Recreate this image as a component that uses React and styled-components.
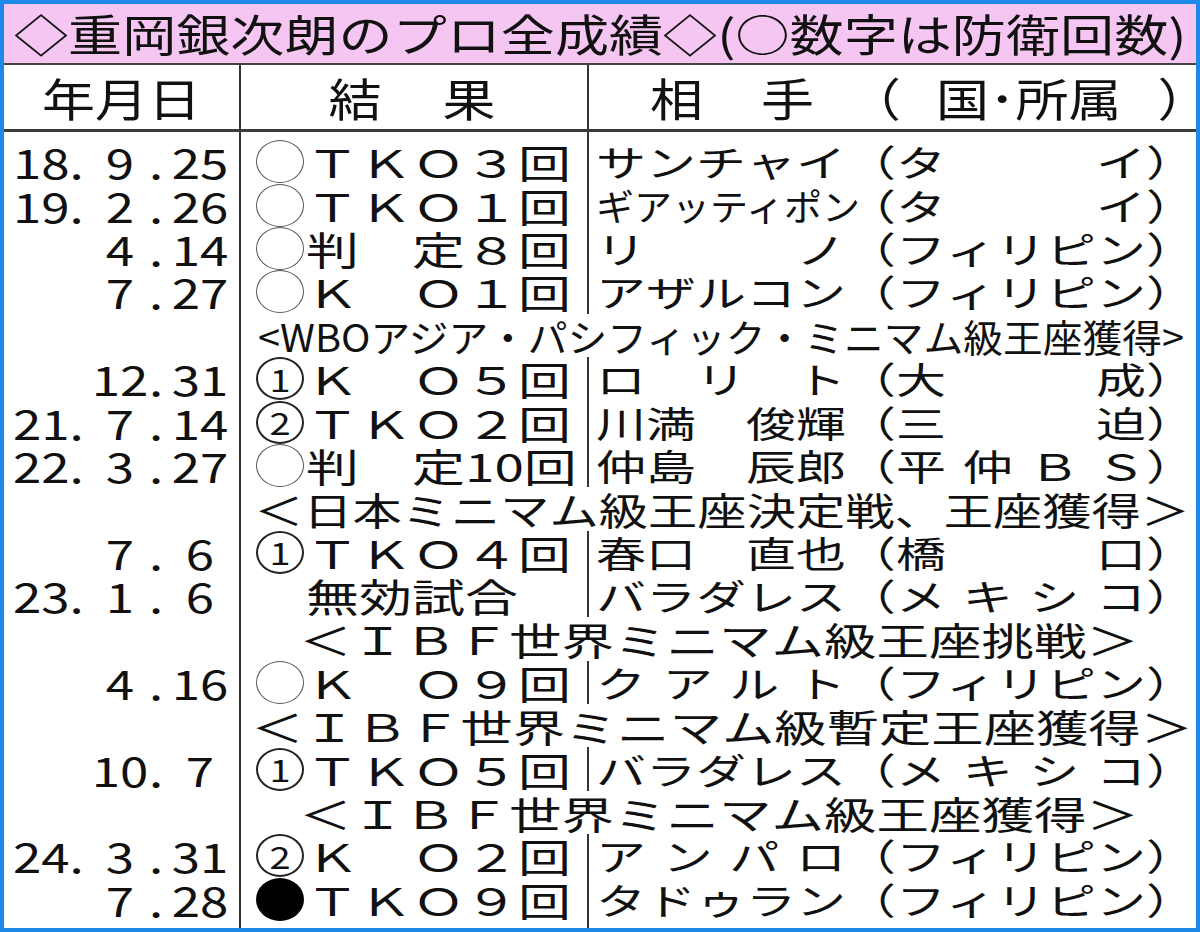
import React, { useLayoutEffect, useRef, useState } from 'react';
import styled, { createGlobalStyle } from 'styled-components';

const GlobalStyle = createGlobalStyle`
  html, body { margin: 0; padding: 0; background: #ffffff; }
  body {
    font-family: "Noto Sans CJK JP", "Noto Sans", sans-serif;
    color: #111;
  }
`;

const LINE = '#333';
const COLS = '237px 348px 1fr';
const SQUASH = 0.73;

const Frame = styled.div`
  width: 1200px;
  height: 932px;
  box-sizing: border-box;
  border: 4px solid #1e88e8;
  display: flex;
  flex-direction: column;
  overflow: hidden;
  background: #fff;
`;

const Title = styled.header`
  flex: none;
  height: 61px;
  box-sizing: border-box;
  padding-left: 10px;
  background: #f6c6f2;
  border-bottom: 2px solid #444;
  display: flex;
  align-items: center;
  font-size: 51px;
  line-height: 59px;
`;

const Head = styled.div`
  flex: none;
  display: grid;
  grid-template-columns: ${COLS};
  height: 67px;
  box-sizing: border-box;
  border-bottom: 3px solid #3c3c3c;
  font-size: 53px;
  line-height: 64px;
`;

const HeadCell = styled.div`
  display: flex;
  align-items: center;
  justify-content: ${(p) => (p.$left ? 'flex-start' : 'center')};
  padding-left: ${(p) => p.$pl || 0}px;
  border-right: ${(p) => (p.$last ? 'none' : `2px solid ${LINE}`)};
`;

const HeadWord = styled.span`
  display: inline-block;
  white-space: pre;
  margin-left: ${(p) => p.$ml || 0}px;
  letter-spacing: ${(p) => p.$ls || 0}px;
  transform: scaleY(0.86);
`;

const Body = styled.div`
  flex: 1;
  display: flex;
  flex-direction: column;
`;

const Row = styled.div`
  display: grid;
  grid-template-columns: ${COLS};
  height: ${(p) => (p.$grow ? 'auto' : `${p.$h}px`)};
  flex: ${(p) => (p.$grow ? 1 : 'none')};
  line-height: 43px;
`;

const DateCell = styled.div`
  display: flex;
  align-items: center;
  justify-content: flex-end;
  padding-right: 4px;
  border-right: 2px solid ${LINE};
  font-size: 51px;
`;

const DSlot = styled.span`
  flex: none;
  width: ${(p) => p.$w}px;
  margin-left: ${(p) => p.$ml || 0}px;
  text-align: ${(p) => p.$align || 'center'};
`;

const ResultCell = styled.div`
  display: flex;
  align-items: center;
  padding-left: 13px;
  border-right: 2px solid ${LINE};
  font-size: 53px;
`;

const OppCell = styled.div`
  display: flex;
  align-items: center;
  padding-left: 7px;
  font-size: 50px;
  white-space: nowrap;
`;

const NoteCell = styled.div`
  grid-column: span 2;
  display: flex;
  align-items: center;
  padding-left: ${(p) => p.$indent}px;
  font-size: 52px;
`;

const Flat = styled.span`
  display: inline-block;
  white-space: pre;
  transform: scaleY(${(p) => p.$sy ?? SQUASH});
`;

const MarkSlot = styled.span`
  flex: none;
  width: 52px;
  height: 43px;
  display: flex;
  align-items: center;
  justify-content: center;
`;

const Ring = styled.span`
  width: 48px;
  height: 43px;
  box-sizing: border-box;
  border-radius: 50%;
  border: ${(p) => (p.$solid ? 'none' : p.$num ? '2px solid #222' : '1.5px solid #555')};
  background: ${(p) => (p.$solid ? '#000' : 'transparent')};
  display: flex;
  align-items: center;
  justify-content: center;
  font-size: 38px;
  line-height: 1;
  color: #111;
`;

const SpreadBox = styled.span`
  flex: none;
  display: flex;
  justify-content: space-between;
  width: ${(p) => p.$w}px;
`;

const Paren = styled.span`
  flex: none;
  width: 50px;
  display: inline-block;
  transform: scaleY(${SQUASH});
`;

const FitBox = styled.span`
  flex: none;
  display: inline-block;
  white-space: nowrap;
`;

const FitInner = styled.span`
  display: inline-block;
  white-space: pre;
  transform-origin: left center;
`;

function Fit({ width, sy = SQUASH, children }) {
  const ref = useRef(null);
  const [sx, setSx] = useState(1);

  useLayoutEffect(() => {
    const measure = () => {
      if (!ref.current) return;
      const w = ref.current.offsetWidth;
      if (w > 0) setSx(width / w);
    };
    measure();
    if (document.fonts && document.fonts.ready) document.fonts.ready.then(measure);
  }, [width]);

  return (
    <FitBox style={{ width }}>
      <FitInner ref={ref} style={{ transform: `scale(${sx}, ${sy})` }}>
        {children}
      </FitInner>
    </FitBox>
  );
}

function Spread({ width, items }) {
  if (typeof items === 'string') {
    // long katakana names get squeezed into the slot, like the paper does
    if (items.length > 5) {
      return (
        <FitBox style={{ width }}>
          <Fit width={width + 14}>{items}</Fit>
        </FitBox>
      );
    }
    items = items.split('');
  }
  return (
    <SpreadBox $w={width}>
      {items.map((t, i) => (
        <Flat key={i}>{t}</Flat>
      ))}
    </SpreadBox>
  );
}

function Mark({ kind }) {
  if (kind === null) return <MarkSlot />;
  if (kind === 'x') {
    return (
      <MarkSlot>
        <Ring $solid />
      </MarkSlot>
    );
  }
  return (
    <MarkSlot>
      <Ring $num={kind !== 'o'}>{kind !== 'o' && <Flat $sy={0.8}>{kind}</Flat>}</Ring>
    </MarkSlot>
  );
}

const fights = [
  { d: ['18.', '9', '25'], mark: 'o', res: 'ＴＫＯ３回', name: 'サンチャイ', aff: ['タ', 'イ'] },
  { d: ['19.', '2', '26'], mark: 'o', res: 'ＴＫＯ１回', name: 'ギアッティポン', aff: ['タ', 'イ'] },
  { d: ['', '4', '14'], mark: 'o', res: '判　定８回', name: ['リ', 'ノ'], aff: 'フィリピン' },
  { d: ['', '7', '27'], mark: 'o', res: 'Ｋ　Ｏ１回', name: 'アザルコン', aff: 'フィリピン' },
  { note: '<WBOアジア・パシフィック・ミニマム級王座獲得>', indent: 17, width: 926 },
  { d: ['', '12', '31'], mark: '1', res: 'Ｋ　Ｏ５回', name: ['ロ', 'リ', 'ト'], aff: ['大', '成'] },
  { d: ['21.', '7', '14'], mark: '2', res: 'ＴＫＯ２回', name: ['川満', '俊輝'], aff: ['三', '迫'] },
  { d: ['22.', '3', '27'], mark: 'o', res: '判　定10回', name: ['仲島', '辰郎'], aff: ['平', '仲', 'Ｂ', 'Ｓ'] },
  { note: '＜日本ミニマム級王座決定戦、王座獲得＞', indent: 13, width: 936 },
  { d: ['', '7', '6'], mark: '1', res: 'ＴＫＯ４回', name: ['春口', '直也'], aff: ['橋', '口'] },
  { d: ['23.', '1', '6'], mark: null, res: '無効試合', name: 'バラダレス', aff: ['メ', 'キ', 'シ', 'コ'] },
  { note: '＜ＩＢＦ世界ミニマム級王座挑戦＞', indent: 58, width: 840 },
  { d: ['', '4', '16'], mark: 'o', res: 'Ｋ　Ｏ９回', name: ['ク', 'ア', 'ル', 'ト'], aff: 'フィリピン' },
  { note: '＜ＩＢＦ世界ミニマム級暫定王座獲得＞', indent: 10, width: 942 },
  { d: ['', '10', '7'], mark: '1', res: 'ＴＫＯ５回', name: 'バラダレス', aff: ['メ', 'キ', 'シ', 'コ'] },
  { note: '＜ＩＢＦ世界ミニマム級王座獲得＞', indent: 58, width: 840 },
  { d: ['24.', '3', '31'], mark: '2', res: 'Ｋ　Ｏ２回', name: ['ア', 'ン', 'パ', 'ロ'], aff: 'フィリピン' },
  { d: ['', '7', '28'], mark: 'x', res: 'ＴＫＯ９回', name: 'タドゥラン', aff: 'フィリピン' },
];

function DateParts({ d }) {
  const [y, m, day] = d;
  if (!m) return <DateCell />;
  return (
    <DateCell>
      <DSlot $w={78} $align="left">
        <Flat $sy={0.8}>{y}</Flat>
      </DSlot>
      <DSlot $w={58}>
        <Flat $sy={0.8}>{m}</Flat>
      </DSlot>
      <DSlot $w={12}>
        <Flat $sy={0.8}>.</Flat>
      </DSlot>
      <DSlot $w={70} $ml={4}>
        <Flat $sy={0.8}>{day}</Flat>
      </DSlot>
    </DateCell>
  );
}

function FightRow({ f }) {
  if (f.note) {
    return (
      <Row $h={43.4}>
        <DateCell />
        <NoteCell $indent={f.indent}>
          <Fit width={f.width}>{f.note}</Fit>
        </NoteCell>
      </Row>
    );
  }
  return (
    <Row $h={43.4}>
      <DateParts d={f.d} />
      <ResultCell>
        <Mark kind={f.mark} />
        <Flat>{f.res}</Flat>
      </ResultCell>
      <OppCell>
        <Spread width={250} items={f.name} />
        <Paren>（</Paren>
        <Spread width={250} items={f.aff} />
        <Paren>）</Paren>
      </OppCell>
    </Row>
  );
}

function Filler({ h, grow }) {
  return (
    <Row $h={h} $grow={grow}>
      <DateCell />
      <ResultCell />
      <OppCell />
    </Row>
  );
}

export default function App() {
  return (
    <>
      <GlobalStyle />
      <Frame>
        <Title>
          <Fit width={1172} sy={0.86}>
            ◇重岡銀次朗のプロ全成績◇(○数字は防衛回数)
          </Fit>
        </Title>
        <Head>
          <HeadCell>
            <HeadWord>年月日</HeadWord>
          </HeadCell>
          <HeadCell>
            <HeadWord $ls={4}>結　果</HeadWord>
          </HeadCell>
          <HeadCell $last $left $pl={61}>
            <HeadWord>相</HeadWord>
            <HeadWord $ml={58}>手</HeadWord>
            <HeadWord $ml={34}>（</HeadWord>
            <HeadWord $ml={35}>国･所属</HeadWord>
            <HeadWord $ml={36} $ls={-26}>）</HeadWord>
          </HeadCell>
        </Head>
        <Body>
          <Filler h={8} />
          {fights.map((f, i) => (
            <FightRow key={i} f={f} />
          ))}
          <Filler grow />
        </Body>
      </Frame>
    </>
  );
}
